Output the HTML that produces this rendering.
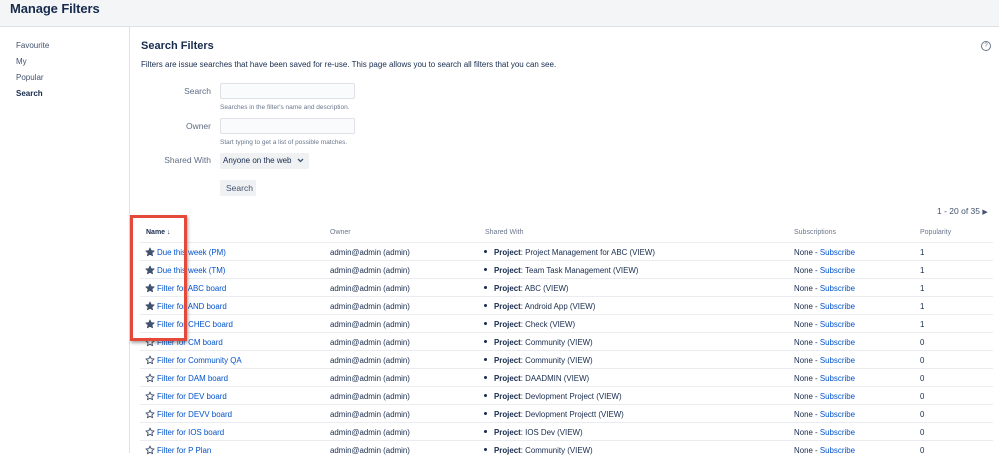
<!DOCTYPE html>
<html><head><meta charset="utf-8"><style>
*{box-sizing:border-box;margin:0;padding:0}
body{width:999px;height:453px;overflow:hidden;font-family:"Liberation Sans",sans-serif;color:#172b4d;background:#fff;position:relative}
.top{position:absolute;left:0;top:0;width:999px;height:27px;background:#f4f5f7;border-bottom:1px solid #dfe1e6}
.top h1{position:absolute;left:10px;top:1px;font-size:13px;font-weight:bold;color:#172b4d;letter-spacing:-0.1px}
.side{position:absolute;left:0;top:27px;width:130px;height:426px;border-right:1px solid #dfe1e6}
.side div{position:absolute;left:16px;font-size:8px;color:#42526e}
.t{position:absolute;white-space:nowrap}
.inp{position:absolute;left:220px;width:135px;height:16px;border:1px solid #dfe1e6;background:#fafbfc;border-radius:2px}
.lbl{position:absolute;font-size:8.5px;color:#5e6c84;text-align:right;width:80px;left:131px}
.hint{position:absolute;left:220px;font-size:6.5px;color:#6b778c}
.btn{position:absolute;background:#f0f1f3;border-radius:2px;font-size:8.5px;color:#42526e}
.row{position:absolute;left:140px;width:853px;height:18px;border-top:1px solid #ebecf0;font-size:7.9px}
.row span{position:absolute;top:5px;white-space:nowrap}
a{color:#0052cc;text-decoration:none}
.st{position:absolute;left:5px;top:4px}
.hd{position:absolute;top:229px;font-size:7px;color:#6b778c}
.bul{position:absolute;left:344px;top:7px;width:3px;height:3px;border-radius:50%;background:#172b4d}
</style></head><body>
<div class="top"><h1>Manage Filters</h1></div>
<div class="side">
<div style="top:14px">Favourite</div>
<div style="top:30px">My</div>
<div style="top:46px">Popular</div>
<div style="top:62px;font-weight:bold;color:#172b4d">Search</div>
</div>
<div class="t" style="left:141px;top:40px;font-size:11px;font-weight:bold">Search Filters</div>
<div class="t" style="left:981px;top:41px;width:10px;height:10px;border:1px solid #6b778c;border-radius:50%;font-size:6px;text-align:center;line-height:8px;color:#6b778c">?</div>
<div class="t" style="left:141px;top:60px;font-size:8px">Filters are issue searches that have been saved for re-use. This page allows you to search all filters that you can see.</div>
<div class="lbl" style="top:86px">Search</div>
<div class="inp" style="top:83px"></div>
<div class="hint" style="top:104px">Searches in the filter's name and description.</div>
<div class="lbl" style="top:121px">Owner</div>
<div class="inp" style="top:118px"></div>
<div class="hint" style="top:139px">Start typing to get a list of possible matches.</div>
<div class="lbl" style="top:155px">Shared With</div>
<div class="btn" style="left:220px;top:153px;width:89px;height:16px;padding:3px 3px;color:#172b4d;font-size:8px">Anyone on the web<svg style="position:absolute;right:5px;top:5px" width="7" height="5" viewBox="0 0 7 5"><path d="M1 1l2.5 2.5L6 1" fill="none" stroke="#42526e" stroke-width="1.3"/></svg></div>
<div class="btn" style="left:220px;top:180px;width:36px;height:16px;padding:3px 6px">Search</div>
<div class="t" style="left:937px;top:206px;font-size:8.5px;color:#42526e">1 - 20 of 35 <span style="font-size:7px">&#9654;</span></div>
<div class="hd" style="left:146px;font-weight:bold;color:#172b4d">Name &#8595;</div>
<div class="hd" style="left:330px">Owner</div>
<div class="hd" style="left:485px">Shared With</div>
<div class="hd" style="left:794px">Subscriptions</div>
<div class="hd" style="left:920px">Popularity</div>
<div id="rows"></div>
<script>
var d=[["Due this week (PM)","Project Management for ABC (VIEW)",1],["Due this week (TM)","Team Task Management (VIEW)",1],["Filter for ABC board","ABC (VIEW)",1],["Filter for AND board","Android App (VIEW)",1],["Filter for CHEC board","Check (VIEW)",1],["Filter for CM board","Community (VIEW)",0],["Filter for Community QA","Community (VIEW)",0],["Filter for DAM board","DAADMIN (VIEW)",0],["Filter for DEV board","Devlopment Project (VIEW)",0],["Filter for DEVV board","Devlopment Projectt (VIEW)",0],["Filter for IOS board","IOS Dev (VIEW)",0],["Filter for P Plan","Community (VIEW)",0]];
var h="";d.forEach(function(r,i){var y=242+i*18;var f=i<5;
h+='<div class="row" style="top:'+y+'px"><svg class="st" width="10" height="10" viewBox="0 0 24 24"><path d="M12 2.5l2.9 6.3 6.9.7-5.2 4.6 1.5 6.8L12 17.4l-6.1 3.5 1.5-6.8L2.2 9.5l6.9-.7z" fill="'+(f?'#42526e':'none')+'" stroke="#42526e" stroke-width="2.2" stroke-linejoin="round"/></svg><span style="left:17px"><a>'+r[0]+'</a></span><span style="left:190px">admin@admin (admin)</span><div class="bul"></div><span style="left:354px"><b>Project</b>: '+r[1]+'</span><span style="left:654px">None - <a>Subscribe</a></span><span style="left:780px">'+r[2]+'</span></div>';});
document.getElementById("rows").innerHTML=h;
</script>
<div style="position:absolute;left:130px;top:215px;width:57px;height:126px;border:3px solid #e5493a;box-shadow:1px 2px 3px rgba(0,0,0,0.35)"></div>
</body></html>
